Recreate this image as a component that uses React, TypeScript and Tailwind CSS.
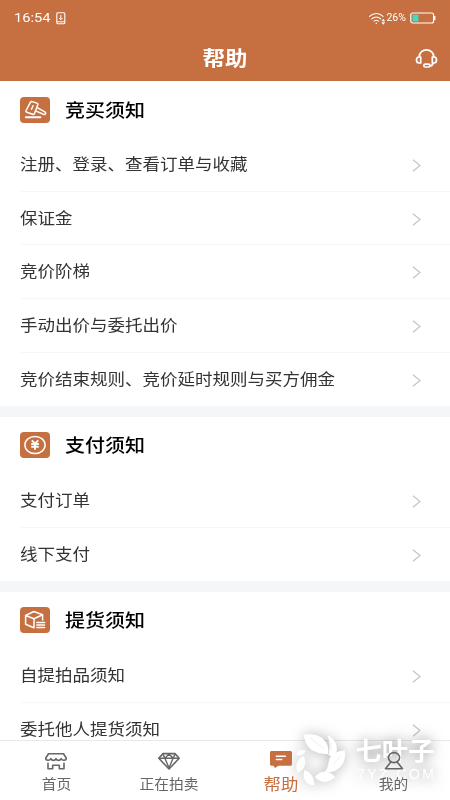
import { useState } from "react";

const sections = [
  {
    title: "竞买须知",
    icon: "gavel",
    items: ["注册、登录、查看订单与收藏", "保证金", "竞价阶梯", "手动出价与委托出价", "竞价结束规则、竞价延时规则与买方佣金"],
  },
  { title: "支付须知", icon: "pay", items: ["支付订单", "线下支付"] },
  { title: "提货须知", icon: "box", items: ["自提拍品须知", "委托他人提货须知"] },
];

const tabs = ["首页", "正在拍卖", "帮助", "我的"];

function StatusBar() {
  return (
    <div className="flex h-[36px] shrink-0 items-center justify-between pl-[14px] pr-[14px]">
      <div className="flex items-center">
        <span className="w-[42px] origin-left scale-x-[1.09] font-['Roboto'] text-[13.5px] leading-none">16:54</span>
        <svg className="h-[13px] w-[10px]" viewBox="0 0 10 13" fill="none" stroke="currentColor">
          <rect x="0.8" y="0.8" width="8" height="11" rx="1" strokeWidth="1.1" />
          <path d="M1 9.8h8M4.8 3v4.5M3 6l1.8 1.8L6.6 6" />
        </svg>
      </div>
      <div className="flex items-center">
        <svg className="h-[13px] w-[18px]" viewBox="0 0 18 13" fill="none" stroke="currentColor" strokeWidth="1.1" strokeLinecap="round">
          <path d="M0.6 4.4C4.4 0.5 10.2 0.5 14 4.4M2.8 6.9c2.6-2.5 6.4-2.5 9 0M5 9.2c1.4-1.2 3.2-1.2 4.600 0" />
          <circle cx="7.3" cy="11.2" r="0.8" fill="currentColor" stroke="none" />
          <path d="M12.4 9.2l1.9-2.5 1.9 2.5zM12.4 10.3l1.9 2.5 1.9-2.5z" fill="currentColor" stroke="none" />
        </svg>
        <span className="w-[23px] scale-x-[1.05] whitespace-nowrap text-left font-['Roboto'] text-[10px] leading-none">26%</span>
        <svg className="h-[12px] w-[26px]" viewBox="0 0 26 12" fill="none">
          <rect x="0.8" y="1" width="22.8" height="10" rx="2" stroke="currentColor" strokeWidth="1.2" />
          <rect x="2.6" y="2.6" width="5.8" height="6.8" fill="#40dcc4" />
          <path d="M24.6 4v4" stroke="currentColor" strokeWidth="1.6" />
        </svg>
      </div>
    </div>
  );
}

function SectionIcon({ name }: { name: string }) {
  return (
    <svg className="h-[26px] w-[30px] shrink-0 rounded-[4px] bg-[#c66f40]" viewBox="0 0 30 26" fill="none" stroke="#fff" strokeWidth="1.5" strokeLinejoin="round" strokeLinecap="round">
      {name === "gavel" && (
        <>
          <path d="M12.3 4.6l4.6 1.5c.9.3 1.200.9.9 1.700l-3.300 8.600c-.3.900-1 1.200-1.800.900l-5.900-2.100c-.9-.3-1.100-.9-.7-1.700l4.300-8.200c.4-.8 1-1 1.900-.7zM17.200 10.600l7.600 4.200c1.800 1 .4 3.400-1.400 2.500l-8-3.400" />
          <path d="M13 8.800l-1.500 3.500" />
          <path d="M5.800 20.200h14.600" strokeWidth="1.900" />
        </>
      )}
      {name === "pay" && (
        <>
          <ellipse cx="15" cy="13" rx="10.1" ry="8.6" />
          <path d="M11.8 8.3l3.2 3.4 3.2-3.4M11.2 12h7.6M11.2 14.8h7.6M15 12v5.8" strokeWidth="1.9" strokeLinecap="butt" />
        </>
      )}
      {name === "box" && (
        <>
          <path d="M13.8 20.8l-8.2-3.6V8.5l8.2-4 8.8 3.3v5.2M5.6 8.5l8.4 3.2 8.6-3.9M14 11.7v9" />
          <path d="M16.8 15.4h7.8M16.8 18h7.8M16.8 20.6h7.8" />
        </>
      )}
    </svg>
  );
}

function TabIcon({ index }: { index: number }) {
  return (
    <svg className="h-[20px] w-[24px]" viewBox="0 0 24 20" fill="none" stroke="currentColor" strokeWidth="1.6" strokeLinejoin="round" strokeLinecap="round">
      {index === 0 && (
        <>
          <path d="M4.5 2.8h15L22.2 7c.2 2.6-3.8 3.2-5.1.6-1 2.4-4.2 2.4-5.1 0-1 2.4-4.2 2.4-5.1 0C5.6 10.2 1.6 9.6 1.8 7z" />
          <path d="M4 12.2v5.6h4.7v-3.6h6.6v3.6H20v-5.6" />
        </>
      )}
      {index === 1 && (
        <>
          <path d="M6 2.6h12L22.2 7.3 12 18 1.8 7.3z" />
          <path d="M2.5 7.3h19M6 3.2l2 4.2L12 17l4-9.6 2-4.2M7.8 7.2L12 3l4.2 4.2" strokeWidth="1.4" />
        </>
      )}
      {index === 2 && (
        <>
          <path d="M2.7 0h18.6c1 0 1.7.6 1.7 1.5v11.7c0 .9-.7 1.5-1.7 1.5h-12L6 17l-1.5-2.3H2.7c-1 0-1.7-.6-1.7-1.5V1.5C1 .6 1.7 0 2.7 0z" fill="currentColor" stroke="none" />
          <path d="M7.4 5.3h9M7.4 8.6h5.3" stroke="#fff" strokeWidth="1.5" />
        </>
      )}
      {index === 3 && (
        <>
          <ellipse cx="12" cy="6.6" rx="5.6" ry="5" />
          <path d="M8.8 11L3.5 17.8h17L15.2 11" />
        </>
      )}
    </svg>
  );
}

function Watermark() {
  return (
    <svg className="pointer-events-none absolute bottom-0 right-0 h-[75px] w-[162px] overflow-visible" viewBox="0 0 162 75" fill="#fff">
      <g className="drop-shadow-[0_0_7px_rgba(0,0,0,0.3)]">
        <path d="M16 10c7-2 16 0 20 5 4 4 5 9 4 14-11 0-23-4-24-19z" />
        <path d="M39.5 10c6 3 11 10 9 17l-4 5-4-2c2-7 1-14-1-20z" />
        <path d="M57 25.5c-7 0-15 4-16 10-1 5-1 8-5 12 12 1 23-7 21-22z" />
        <path d="M8.5 30c0-4 5-6 9-4.500-1 4-5 6-9 4.500zM15.500 31c4 7 1 14-6 17-3-8 0-14 6-17zM16.500 45c7 3 10 8 9.500 15-8 0-12-7-9.500-15zM27 52c5-7 15-7 20 0-6 6-14 7-20 0z" />
        <path d="M22 13l14 11M41 15l3 10M53 30l-8 10" stroke="#e6e6e6" strokeWidth="0.6" />
      </g>
      <g className="drop-shadow-[0_0_7px_rgba(0,0,0,0.5)]">
        <text x="67.5" y="35" fontSize="25" fontWeight="700" fontFamily="Noto Sans CJK SC, sans-serif" textLength="79" lengthAdjust="spacingAndGlyphs">七叶子</text>
        <text x="69" y="53.5" fontSize="14" textLength="77" fontFamily="Liberation Sans, sans-serif">7YZ.COM</text>
      </g>
    </svg>
  );
}

export default function App() {
  const [active, setActive] = useState(2);

  return (
    <div className="relative flex h-[800px] w-[450px] flex-col overflow-hidden bg-white font-['Roboto','Noto_Sans_CJK_SC',sans-serif]">
      <header className="flex h-[81px] shrink-0 flex-col bg-[#c66f40] text-white">
        <StatusBar />
        <div className="grid grow grid-cols-[1fr_auto_1fr] items-center">
          <h1 className="col-start-2 scale-x-[1.12] text-[20px] font-bold leading-[42px]">帮助</h1>
          <svg className="mr-[12px] h-[20px] w-[23px] justify-self-end" viewBox="0 0 23 20" fill="none" stroke="currentColor" strokeWidth="1.7" strokeLinejoin="round">
            <path d="M4.2 8C4.5-1.4 18.5-1.4 18.8 8" />
            <path d="M5.7 8H4C2.4 8 1.5 9 1.5 11s.9 3 2.5 3h1.7zM17.3 8H19c1.6 0 2.5 1 2.5 3s-.9 3-2.5 3h-1.7zM18 14c0 2-1 2.8-3.2 3" />
            <rect x="8.8" y="15.2" width="6.2" height="2.8" rx="1.4" />
          </svg>
        </div>
      </header>

      <main className="flex min-h-0 grow flex-col gap-[10.5px] overflow-hidden bg-[#f5f6f8]">
        {sections.map((section) => (
          <section key={section.title} className="shrink-0 bg-white">
            <div className="flex h-[57px] items-center gap-[15px] pl-[20px]">
              <SectionIcon name={section.icon} />
              <h2 className="origin-left scale-x-[1.11] pt-[2px] text-[18px] font-medium leading-none text-black">{section.title}</h2>
            </div>
            <ul className="divide-y divide-[#f7f7f7] pl-[20px]">
              {section.items.map((item) => (
                <li key={item} className="flex h-[53.7px] items-center justify-between pr-[29px]">
                  <span className="origin-left scale-x-[1.094] whitespace-nowrap pt-[1.5px] text-[16px] leading-none text-[#333]">{item}</span>
                  <svg className="mt-[2px] h-[13px] w-[9px]" viewBox="0 0 9 13" fill="none" stroke="#c4c4c4" strokeWidth="1.2">
                    <path d="M1 0.7l7 5.8-7 5.8" />
                  </svg>
                </li>
              ))}
            </ul>
          </section>
        ))}
      </main>

      <Watermark />
      <nav className="grid h-[60px] shrink-0 grid-cols-4 border-t border-[#e8e8e8]">
        {tabs.map((tab, i) => (
          <button
            key={tab}
            onClick={() => setActive(i)}
            className={`relative flex flex-col items-center pt-[10px] ${active === i ? "text-[#c66f40]" : "text-[#666]"}`}
          >
            <TabIcon index={i} />
            <span className={`flex h-[28px] scale-x-[1.09] items-center leading-none ${active === i ? "text-[16px]" : "text-[13.5px]"}`}>{tab}</span>
          </button>
        ))}
      </nav>
    </div>
  );
}
